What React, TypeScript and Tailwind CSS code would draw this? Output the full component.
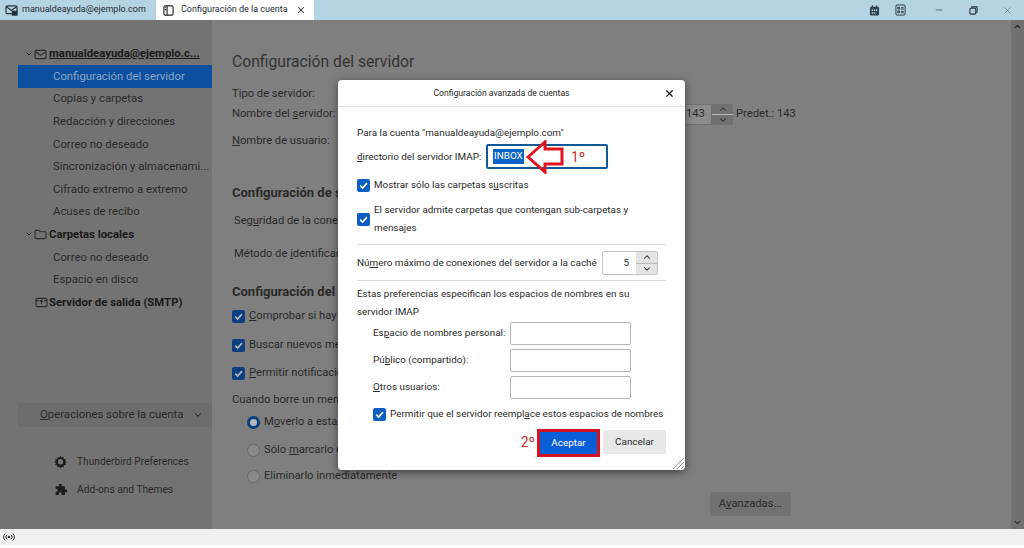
import React from 'react';
import { ChevronDown, ChevronUp, Minus, X } from 'lucide-react';

// shaded page behind the dialog, so colours are already dimmed
const font = { fontFamily: 'Roboto, "Liberation Sans", sans-serif' };

const sideItems = [
  { label: 'Configuración del servidor', active: true },
  { label: 'Copias y carpetas' },
  { label: 'Redacción y direcciones' },
  { label: 'Correo no deseado' },
  { label: 'Sincronización y almacenami...' },
  { label: 'Cifrado extremo a extremo' },
  { label: 'Acuses de recibo' },
];

const Check = ({ dim = false }: { dim?: boolean }) => (
  <span className={`flex h-[13px] w-[13px] shrink-0 items-center justify-center rounded-[2px] ${dim ? 'bg-[#0b3f80]' : 'bg-[#0a5ec4]'}`}>
    <svg viewBox="0 0 12 12" className={`h-[11px] w-[11px] ${dim ? 'text-[#b9b9b9]' : 'text-white'}`} fill="none" stroke="currentColor" strokeWidth="1.8">
      <path d="M2.4 6.2 5 8.8 9.8 3.4" />
    </svg>
  </span>
);

const Radio = ({ on = false }: { on?: boolean }) => (
  <span className={`h-[13px] w-[13px] shrink-0 rounded-full ${on ? 'border-[3.5px] border-[#0b3f80] bg-[#b9b9b9]' : 'border border-[#6a6a6a] bg-[#8a8a8a]'}`} />
);

const Spinner = ({ className }: { className: string }) => (
  <span className={`flex flex-col ${className}`}>
    <span className="flex flex-1 items-center justify-center border-b border-[#bdbdbd]">
      <ChevronUp className="h-[10px] w-[10px]" strokeWidth={2.5} />
    </span>
    <span className="flex flex-1 items-center justify-center">
      <ChevronDown className="h-[10px] w-[10px]" strokeWidth={2.5} />
    </span>
  </span>
);

const TextBox = () => <div className="h-[23px] w-[121px] rounded-[2px] border border-[#b5b5b5] bg-white" />;

const Sidebar = () => (
  <aside className="flex w-[212px] shrink-0 flex-col whitespace-nowrap bg-[#737373] pl-[18px] pt-[23px] text-[11.35px] text-[#2a2a2a]">
    <div className="flex h-[22px] items-center pl-[7px] font-bold text-[#1a1a1a]">
      <ChevronDown className="h-[8px] w-[8px]" strokeWidth={3} />
      <svg viewBox="0 0 14 12" className="ml-[1px] mr-[2px] h-[11px] w-[13px]" fill="none" stroke="#2c2c2c" strokeWidth="1.2">
        <rect x="1" y="1.5" width="12" height="9" rx="1.5" />
        <path d="M1.5 3 7 7l5.5-4" />
      </svg>
      <span className="underline">manualdeayuda@ejemplo.c...</span>
    </div>
    {sideItems.map((item) => (
      <div
        key={item.label}
        className={`flex h-[22.6px] items-center pl-[35px] ${item.active ? 'bg-[#0b4f9e] text-[#8aa6c8]' : ''}`}
      >
        {item.label}
      </div>
    ))}
    <div className="flex h-[22.6px] items-center pl-[7px] font-bold text-[#1a1a1a]">
      <ChevronDown className="h-[8px] w-[8px]" strokeWidth={3} />
      <svg viewBox="0 0 14 12" className="ml-[1px] mr-[2px] h-[11px] w-[13px]" fill="none" stroke="#2c2c2c" strokeWidth="1.2">
        <path d="M1 2.5A1 1 0 0 1 2 1.5h3l1.500 1.500H12a1 1 0 0 1 1 1v5.500a1 1 0 0 1-1 1H2a1 1 0 0 1-1-1Z" />
      </svg>
      <span>Carpetas locales</span>
    </div>
    <div className="flex h-[22.6px] items-center pl-[35px]">Correo no deseado</div>
    <div className="flex h-[22.6px] items-center pl-[35px]">Espacio en disco</div>
    <div className="flex h-[22.6px] items-center pl-[17px] font-bold text-[#1a1a1a]">
      <svg viewBox="0 0 14 12" className="mr-[1px] h-[11px] w-[13px]" fill="none" stroke="#2c2c2c" strokeWidth="1.2">
        <rect x="1" y="1.5" width="12" height="9" rx="1.5" />
        <path d="M1 4h3M10 4h3M7 8V3.500M5.200 5 7 3.200 8.800 5" />
      </svg>
      <span>Servidor de salida (SMTP)</span>
    </div>
    <div className="mt-[89px] flex h-[24px] items-center bg-[#6d6d6d] pl-[22px]">
      <span><u>O</u>peraciones sobre la cuenta</span>
      <ChevronDown className="ml-[10px] h-[10px] w-[10px]" strokeWidth={2.5} />
    </div>
    <div className="mt-[25px] flex h-[20px] items-center pl-[36px] text-[10.2px]">
      <svg viewBox="0 0 24 24" className="mr-[10px] h-[13px] w-[13px]" fill="#1c1c1c">
        <path d="M12 1.500l2 3.200 3.600-1.100.4 3.800 3.800.4-1.100 3.600 3 1.600-3 2 1.100 3.600-3.800.4-.4 3.800-3.600-1.100-2 3.200-2-3.200-3.600 1.100-.4-3.800-3.800-.4 1.100-3.600-3-2 3-1.600-1.100-3.600 3.800-.4.4-3.800 3.600 1.100Zm0 6a5 5 0 1 0 0 10 5 5 0 0 0 0-10Z" />
      </svg>
      Thunderbird Preferences
    </div>
    <div className="mt-[8px] flex h-[20px] items-center pl-[36px] text-[10.2px]">
      <svg viewBox="0 0 24 24" className="mr-[10px] h-[13px] w-[13px]" fill="#1c1c1c">
        <path d="M9 2h5v4h6v6h2.500a2.500 2.500 0 0 1 0 5H20v5h-6v-2.500a2.500 2.500 0 0 0-5 0V22H3v-6h1.500a2.500 2.500 0 0 0 0-5H3V6h6Z" />
      </svg>
      Add-ons and Themes
    </div>
  </aside>
);

const Main = () => (
  <main className="flex-1 whitespace-nowrap bg-[#7f7f7f] pl-[20px] pt-[32px] text-[11.2px] text-[#2a2a2a]">
    <h1 className="h-[20px] text-[15.7px] leading-[20px] text-[#333333]">Configuración del servidor</h1>
    <div className="mt-[15px] h-[14px] leading-[14px]">Tipo de servidor:</div>
    <div className="mt-[1px] flex h-[24px] items-center">
      <span className="w-[454px]">Nombre del <u>s</u>ervidor:</span>
      <span className="flex h-[21px] w-[26px] items-center border-y border-r border-[#6f6f6f] bg-[#8c8c8c]">143</span>
      <Spinner className="h-[21px] w-[21px] rounded-r-[2px] bg-[#717171]" />
      <span className="ml-[3px]">Predet.: 143</span>
    </div>
    <div className="mt-[8px] h-[14px] leading-[14px]"><u>N</u>ombre de usuario:</div>
    <h2 className="mt-[37px] h-[16px] text-[13px] font-bold leading-[16px]">Configuración de seguridad</h2>
    <div className="ml-[2px] mt-[13px] h-[14px] leading-[14px]">Seg<u>u</u>ridad de la conexión:</div>
    <div className="ml-[2px] mt-[19px] h-[14px] leading-[14px]">Método de <u>i</u>dentificación:</div>
    {/* the rest of these two labels sits behind the dialog */}
    <h2 className="mt-[23px] h-[16px] text-[13px] font-bold leading-[16px]">Configuración del s</h2>
    <div className="mt-[9px] flex h-[14px] items-center gap-[4px]"><Check dim /><span><u>C</u>omprobar si hay</span></div>
    <div className="mt-[15px] flex h-[14px] items-center gap-[4px]"><Check dim /><span>Buscar nuevos mensajes</span></div>
    <div className="mt-[14px] flex h-[14px] items-center gap-[4px]"><Check dim /><span><u>P</u>ermitir notificaciones</span></div>
    <div className="mt-[13px] h-[14px] leading-[14px]">Cuando borre un mensaje:</div>
    <div className="ml-[15px] mt-[8px] flex h-[14px] items-center gap-[4px]"><Radio on /><span>M<u>o</u>verlo a esta carpeta</span></div>
    <div className="ml-[15px] mt-[14px] flex h-[14px] items-center gap-[4px]"><Radio /><span>Sólo <u>m</u>arcarlo como borrado</span></div>
    <div className="ml-[15px] mt-[12px] flex h-[14px] items-center gap-[4px]"><Radio /><span>Eliminarlo inmediatamente</span></div>
    <div className="ml-[478px] mt-[9px] flex h-[24px] w-[81px] items-center justify-center rounded-[2px] bg-[#717171]">A<u>v</u>anzadas...</div>
  </main>
);

const Dialog = () => (
  <div className="absolute left-[338px] top-[60px] flex h-[390px] w-[347px] flex-col whitespace-nowrap rounded-[4px] bg-white text-[9.9px] text-[#2a2a2a] shadow-[0_2px_8px_rgba(0,0,0,0.5)]">
    <div className="relative flex h-[27px] shrink-0 items-center justify-center border-b border-[#e4e4e4] pr-[20px] pt-[1px] text-[8.6px]">
      Configuración avanzada de cuentas
      <X className="absolute right-[10px] top-[8px] h-[11px] w-[11px] text-black" strokeWidth={2.5} />
    </div>
    <div className="flex flex-1 flex-col px-[19px]">
      <div className="mt-[19px] h-[14px] leading-[14px]">Para la cuenta "manualdeayuda@ejemplo.com"</div>
      <div className="relative mt-[4px] flex h-[25px] items-center">
        <span className="w-[129px] pt-[1px]"><u>d</u>irectorio del servidor IMAP:</span>
        <div className="flex h-[25px] w-[122px] items-center rounded-[2px] border-2 border-[#0f5a94] pl-[5px]">
          <span className="bg-[#0a64c8] px-[1px] text-white">INBOX</span>
        </div>
        <svg viewBox="0 0 40 34" className="absolute left-[169px] top-[-4px] h-[34px] w-[40px]" fill="none" stroke="#e0141e" strokeWidth="3">
          <path d="M2 17 19 2v7h17v15H19v8Z" />
        </svg>
        <span className="absolute left-[214px] top-[4px] text-[14px] leading-[18px] text-[#c9302c]">1º</span>
      </div>
      <div className="mt-[9px] flex h-[14px] items-center gap-[4px]"><Check /><span>Mostrar sólo las carpetas s<u>u</u>scritas</span></div>
      <div className="mt-[9px] flex items-center gap-[4px]">
        <Check />
        <span className="leading-[18px]">El servidor admite carpetas que conten<u>g</u>an sub-carpetas y<br />mensajes</span>
      </div>
      <div className="mt-[7px] h-[1px] bg-[#dcdcdc]" />
      <div className="mt-[6px] flex h-[24px] items-center">
        <span className="w-[245px]">Nú<u>m</u>ero máximo de conexiones del servidor a la caché</span>
        <div className="flex h-[24px] w-[56px] items-center justify-end rounded-[2px] border border-[#c4c4c4] bg-white">
          <span className="pr-[7px]">5</span>
          <Spinner className="h-full w-[21px] bg-[#e4e4e4]" />
        </div>
      </div>
      <div className="mt-[5px] h-[1px] bg-[#dcdcdc]" />
      <div className="mt-[4px] leading-[18px]">Estas preferencias especifican los espacios de nombres en su<br />servidor IMAP</div>
      <div className="mt-[1px] grid grid-cols-[137px_121px] gap-y-[4px] pl-[16px]">
        <span className="flex items-center"><span>Es<u>p</u>acio de nombres personal:</span></span><TextBox />
        <span className="flex items-center"><span>Pú<u>b</u>lico (compartido):</span></span><TextBox />
        <span className="flex items-center"><span><u>O</u>tros usuarios:</span></span><TextBox />
      </div>
      <div className="ml-[16px] mt-[8px] flex h-[14px] items-center gap-[4px]"><Check /><span>Permitir que el servidor reempl<u>a</u>ce estos espacios de nombres</span></div>
      <div className="mt-[8px] flex items-start justify-end">
        <span className="mr-[2px] mt-[4px] text-[14px] leading-[18px] text-[#c9302c]">2º</span>
        <div className="mr-[3px] flex h-[28px] w-[63px] items-center justify-center border-[3px] border-[#d3131f] bg-[#0a5ed8] text-white">Aceptar</div>
        <div className="mt-[1px] flex h-[24px] w-[63px] items-center justify-center rounded-[2px] bg-[#e8e8e8]">Cancelar</div>
      </div>
    </div>
    <svg viewBox="0 0 12 12" className="absolute bottom-[1px] right-[1px] h-[12px] w-[12px]" stroke="#9a9a9a" strokeWidth="1">
      <path d="M1 12 12 1M5 12l7-7M9 12l3-3" />
    </svg>
  </div>
);

export default function App() {
  return (
    <div className="flex h-[548px] w-[1024px] flex-col overflow-hidden bg-white" style={font}>
      {/* tab bar */}
      <header className="flex h-[20px] shrink-0 items-center whitespace-nowrap bg-[#b4d4e4] text-[9px] text-[#1f2a33]">
        <div className="flex h-full w-[156px] items-center pl-[5px]">
          <svg viewBox="0 0 14 12" className="mr-[4px] h-[11px] w-[13px]" fill="none" stroke="#24323c" strokeWidth="1.3">
            <rect x="1" y="1" width="12" height="8.500" rx="1.500" />
            <path d="M1.500 2 7 6l5.500-4" />
            <rect x="8" y="7" width="5" height="4" fill="#24323c" />
          </svg>
          manualdeayuda@ejemplo.com
        </div>
        <div className="flex h-full w-[158px] items-center bg-white pl-[7px]">
          <svg viewBox="0 0 12 12" className="mr-[7px] h-[11px] w-[11px]" fill="none" stroke="#222" strokeWidth="1.200">
            <rect x="1" y="1" width="10" height="10" rx="1.500" />
            <path d="M4.500 1v10" />
            <path d="M2 3h1.500M2 5h1.500" />
          </svg>
          Configuración de la cuenta
          <X className="ml-[8px] h-[10px] w-[10px]" strokeWidth={2.5} />
        </div>
        <div className="ml-auto flex h-full items-center text-[#1f3340]">
          <svg viewBox="0 0 12 12" className="mr-[15px] h-[11px] w-[11px]" fill="#33454f">
            <rect x="1" y="2" width="10" height="9.500" rx="1.500" />
            <rect x="3" y="0.500" width="1.500" height="2.500" />
            <rect x="7.500" y="0.500" width="1.500" height="2.500" />
            <path d="M3 5h1.500v1.500H3zM5.300 5h1.500v1.500H5.300zM7.500 5H9v1.500H7.500zM3 8h1.500v1.500H3zM5.300 8h1.500v1.500H5.300z" fill="#b4d4e4" />
          </svg>
          <svg viewBox="0 0 12 12" className="mr-[28px] h-[12px] w-[11px]" fill="none" stroke="#24323c" strokeWidth="1">
            <rect x="1" y="0.500" width="10" height="11" rx="1" />
            <path d="M3 3h2v2H3zM3 7h2v2H3zM6.500 3.500H9.500M6.500 5H9.500M6.500 7.500H9.500M6.500 9H9.500" />
          </svg>
          <Minus className="mr-[25px] h-[10px] w-[10px]" strokeWidth={1.500} />
          <svg viewBox="0 0 10 10" className="mr-[24px] h-[9px] w-[9px]" fill="none" stroke="#24323c" strokeWidth="1.200">
            <rect x="1" y="2.500" width="6.500" height="6.500" rx="1" />
            <path d="M3 2.500V1h6v6H7.500" />
          </svg>
          <X className="mr-[11px] h-[11px] w-[11px] text-[#4b5e69]" strokeWidth={1.200} />
        </div>
      </header>

      <div className="relative flex h-[509px] shrink-0">
        <Sidebar />
        <Main />
        {/* scrollbar */}
        <div className="flex w-[13px] shrink-0 flex-col items-center justify-between bg-[#707070] py-[2px]">
          <ChevronUp className="h-[9px] w-[9px] text-[#2a2a2a]" strokeWidth={3} />
          <ChevronDown className="h-[9px] w-[9px] text-[#2a2a2a]" strokeWidth={3} />
        </div>
        <Dialog />
      </div>

      {/* status bar */}
      <footer className="flex h-[16px] shrink-0 items-center bg-[#f0f0f0] pl-[3px]">
        <svg viewBox="0 0 14 10" className="h-[10px] w-[12px]" fill="none" stroke="#222" strokeWidth="1.1">
          <circle cx="7" cy="5" r="1" fill="#222" />
          <path d="M4.500 2.500a3.500 3.500 0 0 0 0 5M9.500 2.500a3.500 3.500 0 0 1 0 5M2.500 1a6 6 0 0 0 0 8M11.500 1a6 6 0 0 1 0 8" />
        </svg>
      </footer>
    </div>
  );
}
